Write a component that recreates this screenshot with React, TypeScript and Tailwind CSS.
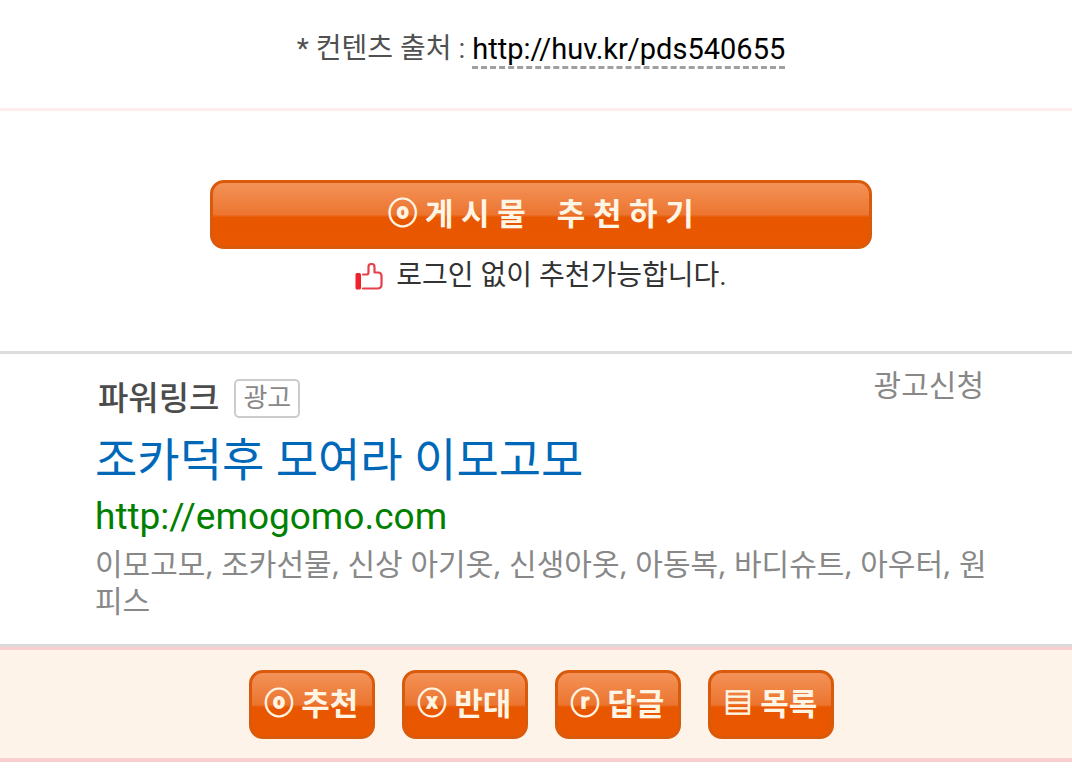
import type { ReactNode } from "react";

const FONT = "font-['Roboto','Noto_Sans_CJK_KR',sans-serif]";

function GlossyButton({ symbol, children, wide = false }: { symbol: string; children: ReactNode; wide?: boolean }) {
  return (
    <button
      type="button"
      className={`flex h-[69px] items-center justify-center whitespace-pre rounded-[14px] border-[3px] border-[#da5a0c] bg-[linear-gradient(to_bottom,#f4955c_0%,#ec7530_50%,#e85700_54%,#e95800_100%)] bg-origin-border text-[31px] leading-none font-bold text-[#fff5e4] ${
        wide ? "w-full max-w-[662px]" : "w-[126px]"
      }`}
    >
      <span className="text-[29px] leading-none [-webkit-text-stroke:1px_#fff5e4]">{symbol}</span>
      <span> {children}</span>
    </button>
  );
}

function ThumbIcon() {
  return (
    <svg width="28" height="30" viewBox="0 -1 28 30" fill="none" aria-hidden="true">
      <rect x="0.500" y="11" width="5.500" height="16.500" rx="1.500" fill="#f0202c" />
      <path
        d="M8 12.500h3.500q2 0 2-2V5q0-3 2.500-3h1q2.500 0 2.500 3v5.500h3.500q3.500 0 3.500 3.500v8.500q0 4-4 4H8"
        stroke="#e5404b"
        strokeWidth="2.200"
        strokeLinecap="round"
        strokeLinejoin="round"
      />
    </svg>
  );
}

export default function App() {
  return (
    <div className={`w-full bg-white ${FONT}`}>
      <p className="flex h-[111px] items-start justify-center whitespace-pre border-b-[3px] border-[#fdeeee] pt-[32px] pl-[10px] text-[28px] leading-[34px] text-[#505050]">
        <span>* 컨텐츠 출처 : </span>
        <a
          href="http://huv.kr/pds540655"
          className="border-b-[3px] border-dashed border-[#a0a0a0] text-[29px] leading-[34px] text-black"
        >
          http://huv.kr/pds540655
        </a>
      </p>

      <section className="flex flex-col items-center border-b-[3px] border-[#dddddd] pt-[69px] pb-[55px] pl-[10px]">
        <GlossyButton symbol="ⓞ" wide>
          {"게 시 물\u00a0\u00a0\u00a0\u00a0추 천 하 기"}
        </GlossyButton>
        <p className="mt-[7px] flex items-center gap-[13px] text-[28px] leading-[40px] text-[#333333]">
          <ThumbIcon />
          로그인 없이 추천가능합니다.
        </p>
      </section>

      <section className="pt-[14px] pr-[80px] pb-[25px] pl-[95px]">
        <div className="flex items-start justify-between pr-[8px]">
          <h2 className="flex items-center gap-[15px] pt-[11px] pl-[3px]">
            <span className="text-[33px] leading-[39px] font-medium text-[#4c4c4c]">파워링크</span>
            <span className="rounded-[5px] border-2 border-[#cccccc] px-[7px] text-[26px] leading-[35px] text-[#888888]">
              광고
            </span>
          </h2>
          <a href="#apply" className="text-[30px] leading-[36px] text-[#888888]">
            광고신청
          </a>
        </div>
        <a href="http://emogomo.com" className="mt-[10px] block text-[46px] leading-[64px] text-[#0068b8]">
          조카덕후 모여라 이모고모
        </a>
        <a href="http://emogomo.com" className="block text-[37px] leading-[50px] text-[#008000]">
          http://emogomo.com
        </a>
        <p className="mt-[3px] font-['Noto_Sans','Noto_Sans_CJK_KR',sans-serif] text-[30px] leading-[37px] text-[#888888]">
          이모고모, 조카선물, 신상 아기옷, 신생아옷, 아동복, 바디슈트, 아우터, 원피스
        </p>
      </section>

      <div className="border-t-[3px] border-[#ddd8da]">
        <nav className="flex justify-center gap-[27px] border-t-[3px] border-b-[4px] border-[#f8cfcd] bg-[#fdf3e9] pt-[20px] pb-[19px] pl-[10px]">
          <GlossyButton symbol="ⓞ">추천</GlossyButton>
          <GlossyButton symbol="ⓧ">반대</GlossyButton>
          <GlossyButton symbol="ⓡ">답글</GlossyButton>
          <GlossyButton symbol="▤">목록</GlossyButton>
        </nav>
      </div>
    </div>
  );
}
